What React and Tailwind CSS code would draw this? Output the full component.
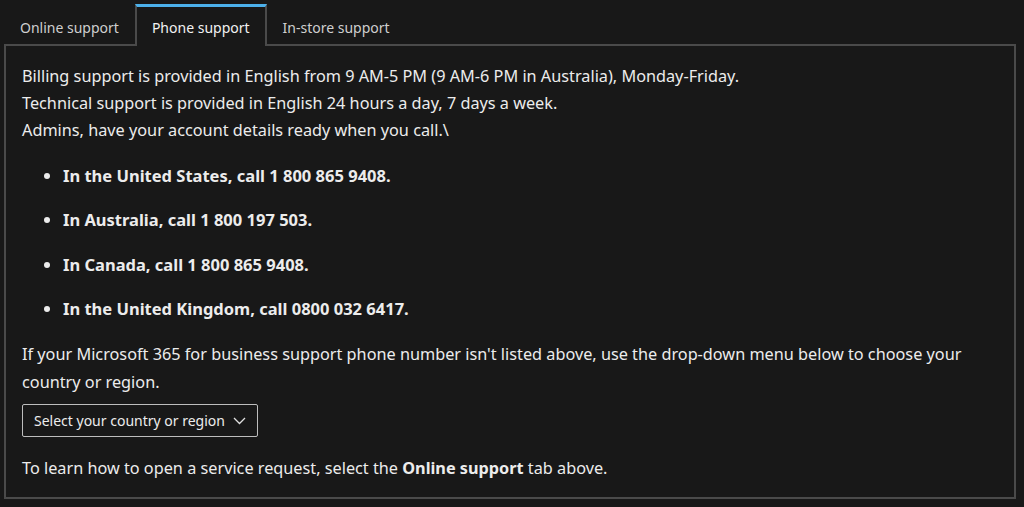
import { useState } from "react";

const tabs = ["Online support", "Phone support", "In-store support"];

const numbers = [
  "In the United States, call 1 800 865 9408.",
  "In Australia, call 1 800 197 503.",
  "In Canada, call 1 800 865 9408.",
  "In the United Kingdom, call 0800 032 6417.",
];

export default function App() {
  const [active, setActive] = useState(1);

  return (
    <div
      className="min-h-screen bg-[#181818] px-1 pt-1 text-[16.25px] text-[#ececec]"
      style={{ fontFamily: '"Noto Sans", "Open Sans", sans-serif' }}
    >
      <div className="relative z-10 -mb-[2px] flex text-[14px]">
        {tabs.map((t, i) =>
          i === active ? (
            <button
              key={t}
              onClick={() => setActive(i)}
              className="h-[42px] border-x-2 border-t-[3px] border-x-[#4a4a4a] border-t-[#4cb0ea] bg-[#181818] px-[15px] pt-[2px] text-[#f2f2f2]"
            >
              {t}
            </button>
          ) : (
            <button
              key={t}
              onClick={() => setActive(i)}
              className="h-[42px] px-4 pt-[5px] text-[#cfcfcf]"
            >
              {t}
            </button>
          )
        )}
      </div>

      <div className="w-[1012px] border-2 border-[#4a4a4a] px-4 pt-[17px] pb-[15px] leading-[27px]">
        <p>Billing support is provided in English from 9 AM-5 PM (9 AM-6 PM in Australia), Monday-Friday.</p>
        <p>Technical support is provided in English 24 hours a day, 7 days a week.</p>
        <p>Admins, have your account details ready when you call.\</p>

        <ul className="mt-[17.5px] flex list-disc flex-col gap-[17.5px] pl-[41px] text-[16.5px] font-bold">
          {numbers.map((n) => (
            <li key={n}>{n}</li>
          ))}
        </ul>

        <p className="mt-[17.5px] leading-[28px]">
          If your Microsoft 365 for business support phone number isn't listed above, use the drop-down menu below to
          choose your country or region.
        </p>

        <button className="mt-2 flex h-[33px] w-[236px] items-center gap-[8px] whitespace-nowrap rounded-[2px] border border-[#bdbdbd] px-[11px] text-[14px] text-[#ececec]">
          <span>Select your country or region</span>
          <svg width="13" height="8" viewBox="0 0 13 8" fill="none" className="mt-[1px] shrink-0">
            <path d="M1 1l5.5 5.5L12 1" stroke="#e0e0e0" strokeWidth="1.3" />
          </svg>
        </button>

        <p className="mt-[18px]">
          To learn how to open a service request, select the <span className="font-bold">Online support</span> tab
          above.
        </p>
      </div>
    </div>
  );
}
